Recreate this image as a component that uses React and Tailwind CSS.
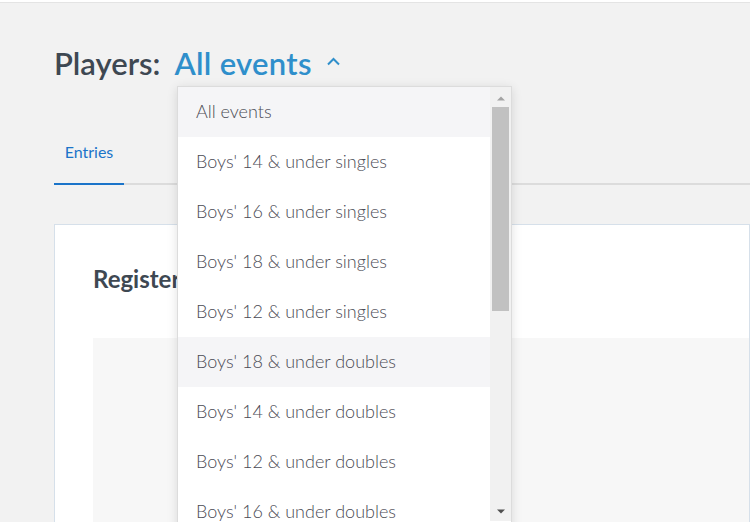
import React from 'react';

const events = [
  'All events',
  "Boys' 14 & under singles",
  "Boys' 16 & under singles",
  "Boys' 18 & under singles",
  "Boys' 12 & under singles",
  "Boys' 18 & under doubles",
  "Boys' 14 & under doubles",
  "Boys' 12 & under doubles",
  "Boys' 16 & under doubles",
];

const EventMenu = () => (
  <div className="absolute left-[177px] top-[86px] w-[335px] h-[460px] bg-white border border-[#dcdcdc] shadow-[0_2px_10px_rgba(0,0,0,0.12)] flex">
    <ul className="flex-1">
      {events.map((ev, i) => (
        <li
          key={ev}
          className={
            'h-[50px] flex items-center pl-[18px] pb-[2px] text-[18px] font-light text-[#4b4b55] ' +
            (i === 0 || i === 5 ? 'bg-[#f5f5f7]' : 'bg-white')
          }
        >
          {ev}
        </li>
      ))}
    </ul>
    {/* scrollbar */}
    <div className="w-[21px] h-[434px] bg-[#f1f1f1] flex flex-col items-center">
      <svg width="10" height="6" viewBox="0 0 10 6" className="mt-[8px] mb-[6px]">
        <path d="M1 5.5L5 1.5L9 5.5Z" fill="#a3a3a3" />
      </svg>
      <div className="w-[17px] h-[204px] bg-[#c1c1c1]" />
      <div className="flex-1" />
      <svg width="10" height="6" viewBox="0 0 10 6" className="mb-[6px]">
        <path d="M1 0.5L5 4.5L9 0.5Z" fill="#505050" />
      </svg>
    </div>
  </div>
);

export default function App() {
  return (
    <div className="relative w-[750px] h-[522px] overflow-hidden bg-[#f2f2f2] font-['Lato',sans-serif]">
      <div className="h-[3px] bg-white border-b border-[#e4e4e4]" />

      <div className="px-[54px]">
        <h1 className="mt-[42px] flex items-center text-[31px] font-semibold leading-[36px]">
          <span className="text-[#3e4852]">Players:</span>
          <span className="ml-[14px] text-[#2f8fcb] tracking-[0.3px]">All events</span>
          <svg width="15" height="9" viewBox="0 0 15 9" className="ml-[14px] mt-[-4px]">
            <path d="M2 7.5L7.5 2L13 7.5" fill="none" stroke="#2f8fcb" strokeWidth="2" />
          </svg>
        </h1>

        <div className="mt-[40px] flex border-b-2 border-[#dcdcdc] mr-[-54px]">
          <div className="w-[70px] h-[64px] flex items-center justify-center text-[16px] text-[#1b74c9] border-b-2 border-[#1b74c9] mb-[-2px]">
            Entries
          </div>
        </div>

        <div className="mt-[39px] mr-[-54px] bg-white border border-[#d6e0ea] h-[320px] pl-[38px] pt-[38px]">
          <h2 className="text-[24px] font-bold text-[#3e4852] leading-[32px]">Registered players</h2>
          <div className="mt-[43px] h-[200px] bg-[#f7f7f7]" />
        </div>
      </div>

      <EventMenu />
    </div>
  );
}
